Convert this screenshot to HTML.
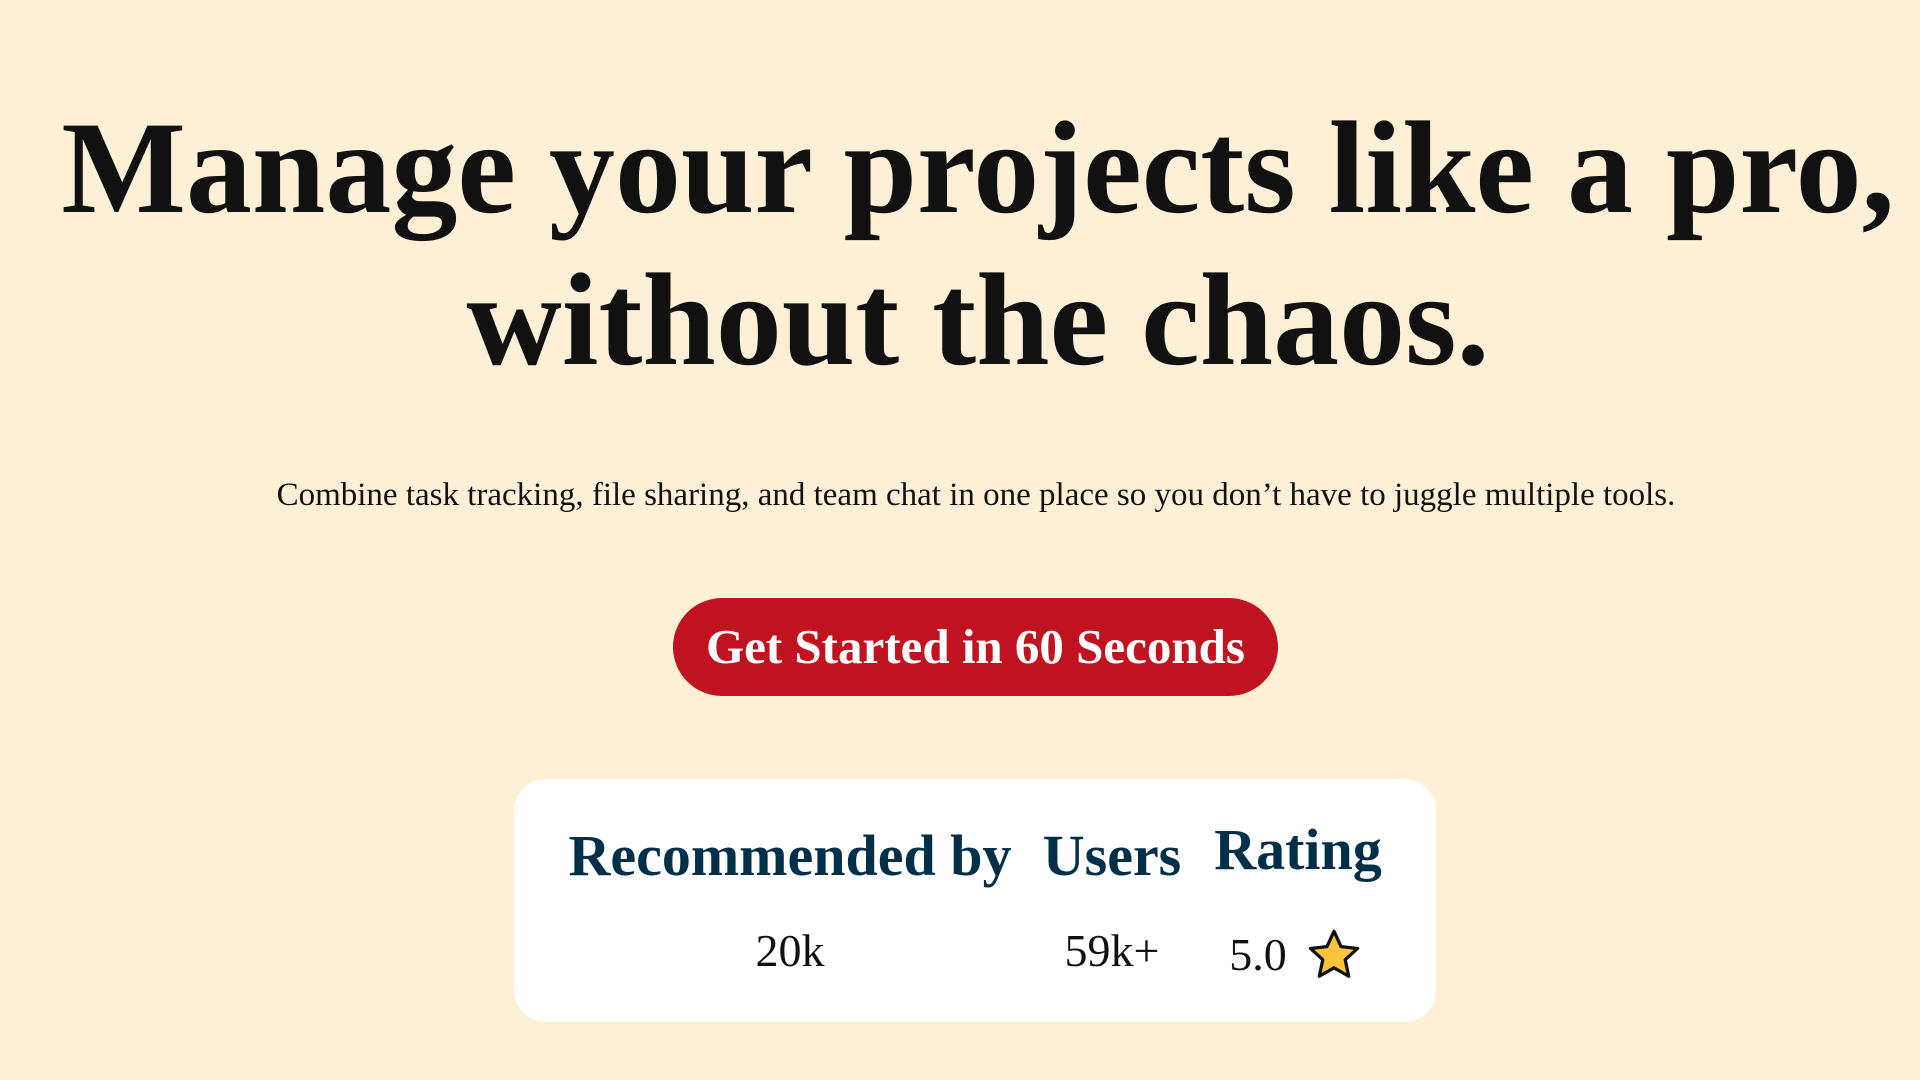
<!DOCTYPE html>
<html><head><meta charset="utf-8"><style>
*{margin:0;padding:0;box-sizing:border-box}
html,body{width:1920px;height:1080px;overflow:hidden;background:#fef0d7;font-family:"Liberation Serif",serif}
.a{position:absolute;white-space:nowrap}
h1{position:absolute;left:18px;width:1920px;top:92px;text-align:center;font-size:132px;line-height:152px;font-weight:bold;color:#111}
.sub{left:16px;width:1920px;top:477px;text-align:center;font-size:33px;color:#111}
.btn{left:673px;top:598px;width:605px;height:98px;border-radius:49px;background:#c1121f;color:#fff;font-weight:bold;font-size:49px;text-align:center;line-height:98px}
.card{left:514px;top:779px;width:922px;height:243px;border-radius:32px;background:#fff}
.h{font-weight:bold;color:#003049;font-size:58px;transform:translateX(-50%)}
.v{font-size:46px;color:#111;transform:translateX(-50%)}
</style></head><body>
<h1>Manage your projects like a pro,<br>without the chaos.</h1>
<div class="a sub">Combine task tracking, file sharing, and team chat in one place so you don’t have to juggle multiple tools.</div>
<div class="a btn">Get Started in 60 Seconds</div>
<div class="a card"></div>
<div class="a h" style="left:790px;top:822px">Recommended by</div>
<div class="a h" style="left:1112px;top:822px">Users</div>
<div class="a h" style="left:1298px;top:816px">Rating</div>
<div class="a v" style="left:790px;top:924px">20k</div>
<div class="a v" style="left:1112px;top:924px">59k+</div>
<div class="a v" style="left:1258px;top:928px">5.0</div>
<svg class="a" style="left:1306px;top:927px" width="56" height="56" viewBox="0 0 24 24"><path d="M12 1.8l3 6.6 7.1.8-5.3 4.8 1.5 7.1L12 17.5l-6.3 3.6 1.5-7.1L1.9 9.2 9 8.4z" fill="#fcc43a" stroke="#111" stroke-width="1.4" stroke-linejoin="round"/></svg>
</body></html>
